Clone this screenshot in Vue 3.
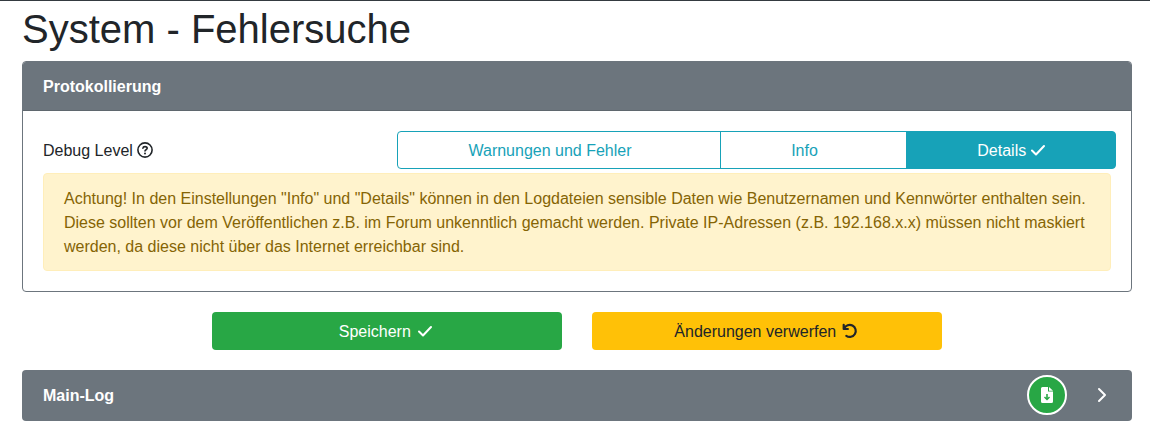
<script setup>
</script>

<template>
  <main class="page">
    <h1>System - Fehlersuche</h1>
    <section class="card">
      <header class="head">Protokollierung</header>
      <div class="body">
        <div class="row">
          <div class="label">Debug Level
            <svg class="help" viewBox="0 0 16 16"><circle cx="8" cy="8" r="7.1" fill="none" stroke="currentColor" stroke-width="1.6" /><path d="M5.900 6.200C6 5.100 6.800 4.600 8 4.600c1.300 0 2.200.7 2.200 1.700 0 1.400-2.200 1.400-2.200 2.700" fill="none" stroke="currentColor" stroke-width="1.600" stroke-linecap="round" /><circle cx="8" cy="11.500" r="1" fill="currentColor" /></svg>
          </div>
          <div class="group">
            <button class="opt one">Warnungen und Fehler</button>
            <button class="opt two">Info</button>
            <button class="opt three active">Details <svg class="check" viewBox="0 0 14 16"><path d="M1 8.500l4 4L13 4" /></svg></button>
          </div>
        </div>
        <div class="alert">Achtung! In den Einstellungen "Info" und "Details" können in den Logdateien sensible Daten wie Benutzernamen und Kennwörter enthalten sein. Diese sollten vor dem Veröffentlichen z.B. im Forum unkenntlich gemacht werden. Private IP-Adressen (z.B. 192.168.x.x) müssen nicht maskiert werden, da diese nicht über das Internet erreichbar sind.</div>
      </div>
    </section>
    <div class="actions">
      <button class="save">Speichern <svg class="check" viewBox="0 0 14 16"><path d="M1 8.500l4 4L13 4" /></svg></button>
      <button class="reset">Änderungen verwerfen <svg class="undo" viewBox="0 0 16 16"><path d="M1.700 1.800v4.200h4.200M2.200 5.600A6 6 0 1 1 4.300 12.800" /></svg></button>
    </div>
    <section class="log">
      <span class="title">Main-Log</span>
      <button class="download"><svg viewBox="0 0 12 16"><path fill="currentColor" fill-rule="evenodd" d="M1.500 0H7v4.500h5v10a1.500 1.500 0 0 1-1.500 1.500h-9A1.500 1.500 0 0 1 0 14.500v-13A1.500 1.500 0 0 1 1.500 0zM5.200 7v3.800L4 9.600l-1 1 3 3 3-3-1-1-1.200 1.200V7zM8 0l4 3.700H8z" /></svg></button>
      <svg class="chevron" viewBox="0 0 10 16"><path d="M2 2l6 6-6 6" /></svg>
    </section>
  </main>
</template>

<style>
body { margin: 0; background: #fff; }
</style>
<style scoped>
* { box-sizing: border-box; }
.page { height: 428px; overflow: hidden; border-top: 1px solid #343a40; padding: 4px 18px 0 22px; font: 16px/24px "Liberation Sans", Arial, sans-serif; color: #212529; }
h1 { margin: 0 0 8px; font-size: 40px; line-height: 48px; font-weight: 400; }
.card { height: 231px; border: 1px solid #6c757d; border-radius: 4px; overflow: hidden; }
.head { height: 49px; padding: 13px 20px 11px; background: #6c757d; color: #fff; font-weight: 700; border-bottom: 1px solid #5f676e; }
.body { padding: 20px; }
.row { display: flex; height: 38px; margin-right: -5px; }
.label { width: 354px; padding-top: 8px; }
.help { width: 16px; height: 16px; vertical-align: -2px; }
.group { display: flex; flex: 1; }
button { font: inherit; margin: 0; padding: 2px 0 0; border-radius: 4px; }
.opt { border: 1px solid #17a2b8; color: #17a2b8; background: #fff; }
.one { width: 324px; border-radius: 4px 0 0 4px; padding-right: 18px; }
.two { width: 187px; margin-left: -1px; border-radius: 0; padding-right: 18px; }
.three { flex: 1; margin-left: -1px; border-radius: 0 4px 4px 0; }
.active { background: #17a2b8; color: #fff; }
.check { width: 14px; height: 16px; vertical-align: -2px; }
.check path, .undo path, .chevron path { fill: none; stroke: currentColor; stroke-width: 2; stroke-linecap: round; stroke-linejoin: round; }
.undo path { stroke-width: 2.2; }
.alert { margin-top: 4px; height: 98px; padding: 13px 20px 11px; border: 1px solid #ffeeba; border-radius: 4px; background: #fff3cd; color: #856404; }
.actions { display: flex; justify-content: center; gap: 30px; margin-top: 20px; }
.actions button { width: 350px; height: 38px; border: 0; }
.save { background: #28a745; color: #fff; }
.save .check { margin: 0 3px; }
.reset { background: #ffc107; color: #212529; }
.undo { width: 16px; height: 16px; margin: 0 2px 0 1px; vertical-align: -2px; }
.log { display: flex; align-items: center; height: 51px; margin-top: 20px; padding: 0 25px 1px 21px; border-radius: 4px; background: #6c757d; color: #fff; font-weight: 700; }
.title { padding-top: 2px; }
.download { display: grid; place-items: center; width: 40px; height: 40px; margin-left: auto; margin-right: 30px; padding: 0; border: 2px solid #fff; border-radius: 50%; background: #28a745; color: #fff; }
.download svg { width: 12px; height: 16px; }
.chevron { width: 10px; height: 16px; }
</style>
